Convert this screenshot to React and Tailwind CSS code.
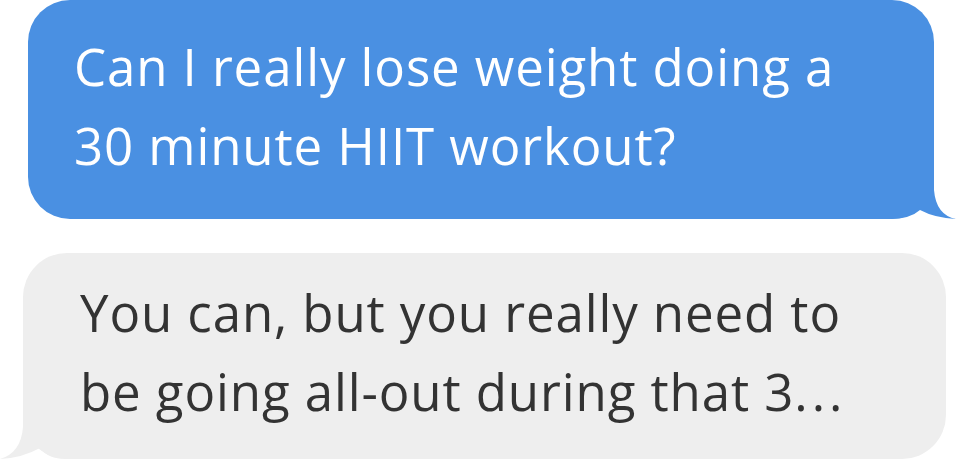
import React from 'react';

function BlueTail() {
	return (
		<svg
			className="absolute right-[-22px] bottom-0 w-[82px] h-[69px]"
			viewBox="0 0 82 69"
			xmlns="http://www.w3.org/2000/svg"
		>
			<path d="M60 0 L60 40 Q62 65 82 69 Q61 68 46 60 Q36 69 16 69 L0 69 L0 0 Z" fill="#4a90e2" />
		</svg>
	);
}

function GrayTail() {
	return (
		<svg
			className="absolute left-[-23px] bottom-0 w-[82px] h-[69px]"
			viewBox="0 0 82 69"
			xmlns="http://www.w3.org/2000/svg"
		>
			<path d="M23 0 L23 37 Q21 63 0 69 Q22 68 40 58 Q48 69 66 69 L82 69 L82 0 Z" fill="#eeeeee" />
		</svg>
	);
}

export default function App() {
	return (
		<div className="w-[956px] h-[459px] bg-white overflow-hidden flex flex-col gap-[34px] font-['Open_Sans',sans-serif] text-[51px] leading-[79px] tracking-[0.9px]">
			<div className="relative ml-[28px] w-[906px] h-[219px] rounded-[42px] bg-[#4a90e2] text-white pl-[46px] pt-[27px]">
				<p className="whitespace-nowrap">Can I really lose weight doing a</p>
				<p className="whitespace-nowrap">30 minute HIIT workout?</p>
				<BlueTail />
			</div>
			<div className="relative ml-[23px] w-[923px] h-[206px] rounded-[44px] bg-[#eeeeee] text-[#333333] pl-[57px] pt-[20px]">
				<p className="whitespace-nowrap">You can, but you really need to</p>
				<p className="whitespace-nowrap">
					be going all-out during that 3<span className="tracking-[4px]">...</span>
				</p>
				<GrayTail />
			</div>
		</div>
	);
}
